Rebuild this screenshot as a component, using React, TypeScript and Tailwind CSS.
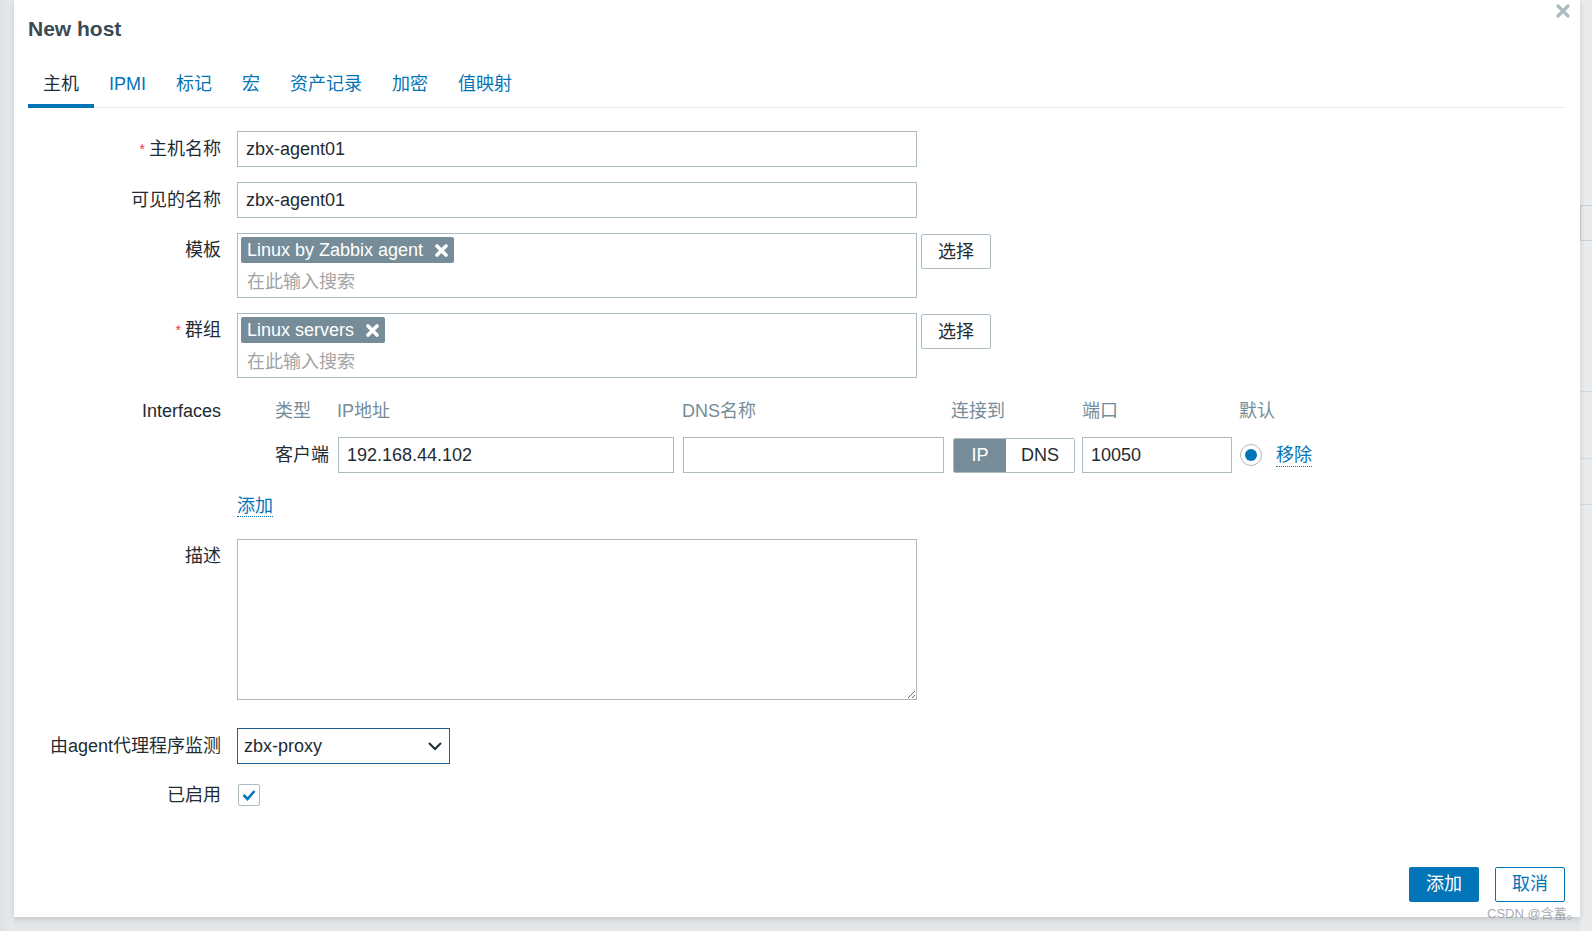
import { useState } from "react";

const tabs = ["主机", "IPMI", "标记", "宏", "资产记录", "加密", "值映射"];

const Label = ({ text, required, className = "" }: { text: string; required?: boolean; className?: string }) => (
  <div className={`w-[193px] shrink-0 text-right leading-[22px] text-[#1f2c33] ${className}`}>
    {required && <span className="text-[#e33734] text-[14px] align-top mr-[4px]">*</span>}
    {text}
  </div>
);

const Tag = ({ text }: { text: string }) => (
  <div className="inline-flex items-center h-[26px] bg-[#768d99] text-white rounded-[2px] pl-[6px] pr-[6px]">
    <span className="leading-[22px]">{text}</span>
    <svg width="13" height="13" viewBox="0 0 13 13" className="ml-[12px]">
      <path d="M2 2 L11 11 M11 2 L2 11" stroke="#fff" strokeWidth="3.6" strokeLinecap="round" />
    </svg>
  </div>
);

const MultiSelect = ({ tag }: { tag: string }) => (
  <div className="flex items-start">
    <div className="w-[680px] h-[65px] border border-[#acbbc2] bg-white pt-[3px] pl-[3px]">
      <Tag text={tag} />
      <div className="mt-[7px] pl-[6px] leading-[22px] text-[#a3a3a3]">在此输入搜索</div>
    </div>
    <button className="ml-[4px] mt-[1px] w-[70px] h-[35px] border border-[#acbbc2] rounded-[2px] bg-white text-[#1f2c33] leading-[22px]">
      选择
    </button>
  </div>
);

const TextInput = ({ value, className = "" }: { value: string; className?: string }) => (
  <div className={`h-[36px] border border-[#acbbc2] bg-white flex items-center pl-[8px] text-[#1f2c33] ${className}`}>
    {value}
  </div>
);

export default function App() {
  const [active] = useState(0);

  return (
    <div className="w-[1592px] h-[931px] bg-[#e3e6e9] relative overflow-hidden font-['Liberation_Sans','Noto_Sans_CJK_SC',sans-serif] text-[18px]">
      {/* faint underlying page on the right */}
      <div className="absolute right-0 top-0 w-[12px] h-full bg-[#e9ecee]">
        <div className="mt-[205px] h-[36px] border-l border-y border-[#c9d1d6]" />
        <div className="mt-[150px] border-t border-[#d5dade]" />
        <div className="mt-[66px] border-t border-[#d5dade]" />
        <div className="mt-[45px] border-t border-[#d5dade]" />
      </div>
      <div className="absolute left-0 top-0 w-[14px] h-full bg-gradient-to-r from-[#dde1e4] to-[#e9ecee]" />

      <div className="relative ml-[14px] w-[1566px] h-[917px] bg-white shadow-[0_2px_6px_rgba(0,0,0,0.15)] flex flex-col px-[14px]">
        <svg width="14" height="14" viewBox="0 0 14 14" className="absolute top-[4px] right-[10px]">
          <path d="M2 2 L12 12 M12 2 L2 12" stroke="#acbbc2" strokeWidth="3.2" strokeLinecap="round" />
        </svg>

        <div className="mt-[17px] h-[24px] leading-[24px] text-[21px] font-bold text-[#3b4a55]">New host</div>

        {/* tabs */}
        <div className="mt-[32px] mr-[1px] flex border-b border-[#ebeef0]">
          {tabs.map((t, i) => (
            <div
              key={t}
              className={`px-[15px] leading-[22px] pb-[9px] border-b-[4px] -mb-[1px] ${
                i === active ? "border-[#0275b8] text-[#1f2c33]" : "border-transparent text-[#0275b8]"
              }`}
            >
              {t}
            </div>
          ))}
        </div>

        {/* form */}
        <div className="mt-[23px] flex flex-col">
          <div className="flex items-center gap-[16px]">
            <Label text="主机名称" required />
            <TextInput value="zbx-agent01" className="w-[680px]" />
          </div>

          <div className="mt-[15px] flex items-center gap-[16px]">
            <Label text="可见的名称" />
            <TextInput value="zbx-agent01" className="w-[680px]" />
          </div>

          <div className="mt-[15px] flex items-start gap-[16px]">
            <Label text="模板" className="pt-[6px]" />
            <MultiSelect tag="Linux by Zabbix agent" />
          </div>

          <div className="mt-[15px] flex items-start gap-[16px]">
            <Label text="群组" required className="pt-[6px]" />
            <MultiSelect tag="Linux servers" />
          </div>

          {/* interfaces */}
          <div className="mt-[22px] flex items-start gap-[16px]">
            <Label text="Interfaces" />
            <div className="flex flex-col">
              <div className="ml-[38px] grid grid-cols-[62px_345px_269px_131px_157px_auto] leading-[22px] text-[#768d99]">
                <div>类型</div>
                <div>IP地址</div>
                <div>DNS名称</div>
                <div>连接到</div>
                <div>端口</div>
                <div>默认</div>
              </div>
              <div className="ml-[38px] mt-[15px] grid grid-cols-[62px_345px_269px_131px_157px_auto] items-center h-[35px]">
                <div className="text-[#1f2c33]">客户端</div>
                <TextInput value="192.168.44.102" className="w-[336px] h-[35px] ml-[1px]" />
                <TextInput value="" className="w-[261px] h-[35px] ml-[1px]" />
                <div className="flex w-[122px] h-[35px] ml-[2px] border border-[#acbbc2] rounded-[2px] overflow-hidden">
                  <div className="w-[52px] bg-[#768d99] text-white flex items-center justify-center">IP</div>
                  <div className="flex-1 bg-white text-[#1f2c33] flex items-center justify-center">DNS</div>
                </div>
                <TextInput value="10050" className="w-[150px] h-[35px]" />
                <div className="flex items-center">
                  <div className="w-[22px] h-[22px] ml-[1px] rounded-full border border-[#acbbc2] bg-white flex items-center justify-center">
                    <div className="w-[12px] h-[12px] rounded-full bg-[#0275b8]" />
                  </div>
                  <span className="ml-[14px] text-[#0275b8] leading-[22px] border-b border-dotted border-[#0275b8]">移除</span>
                </div>
              </div>
              <div className="mt-[23px] leading-[22px]">
                <span className="text-[#0275b8] border-b border-dotted border-[#0275b8]">添加</span>
              </div>
            </div>
          </div>

          <div className="mt-[22px] flex items-start gap-[16px]">
            <Label text="描述" className="pt-[6px]" />
            <textarea className="w-[680px] h-[161px] border border-[#acbbc2] bg-white outline-none" />
          </div>

          <div className="mt-[28px] flex items-center gap-[16px]">
            <Label text="由agent代理程序监测" />
            <div className="w-[213px] h-[36px] border border-[#1a5f92] bg-white flex items-center justify-between pl-[6px] pr-[6px] text-[#1f2c33]">
              <span>zbx-proxy</span>
              <svg width="16" height="10" viewBox="0 0 16 10">
                <path d="M2 2 L8 8 L14 2" fill="none" stroke="#1f2c33" strokeWidth="2" />
              </svg>
            </div>
          </div>

          <div className="mt-[20px] flex items-center gap-[16px]">
            <Label text="已启用" />
            <div className="ml-[1px] w-[22px] h-[22px] border border-[#acbbc2] rounded-[2px] bg-white flex items-center justify-center">
              <svg width="14" height="12" viewBox="0 0 14 12">
                <path d="M1.5 6 L5.5 10 L12.5 2" fill="none" stroke="#0275b8" strokeWidth="2.6" />
              </svg>
            </div>
          </div>
        </div>

        {/* footer */}
        <div className="mt-auto mb-[15px] flex justify-end gap-[16px] pr-[1px]">
          <button className="w-[70px] h-[35px] rounded-[2px] bg-[#0275b8] text-white">添加</button>
          <button className="w-[70px] h-[35px] rounded-[2px] border border-[#0275b8] bg-white text-[#0275b8]">取消</button>
        </div>
      </div>

      <div className="absolute left-[1487px] top-[905px] text-[13px] leading-[17px] text-[#9aa0a6]/90">CSDN @含蓄。</div>
    </div>
  );
}
